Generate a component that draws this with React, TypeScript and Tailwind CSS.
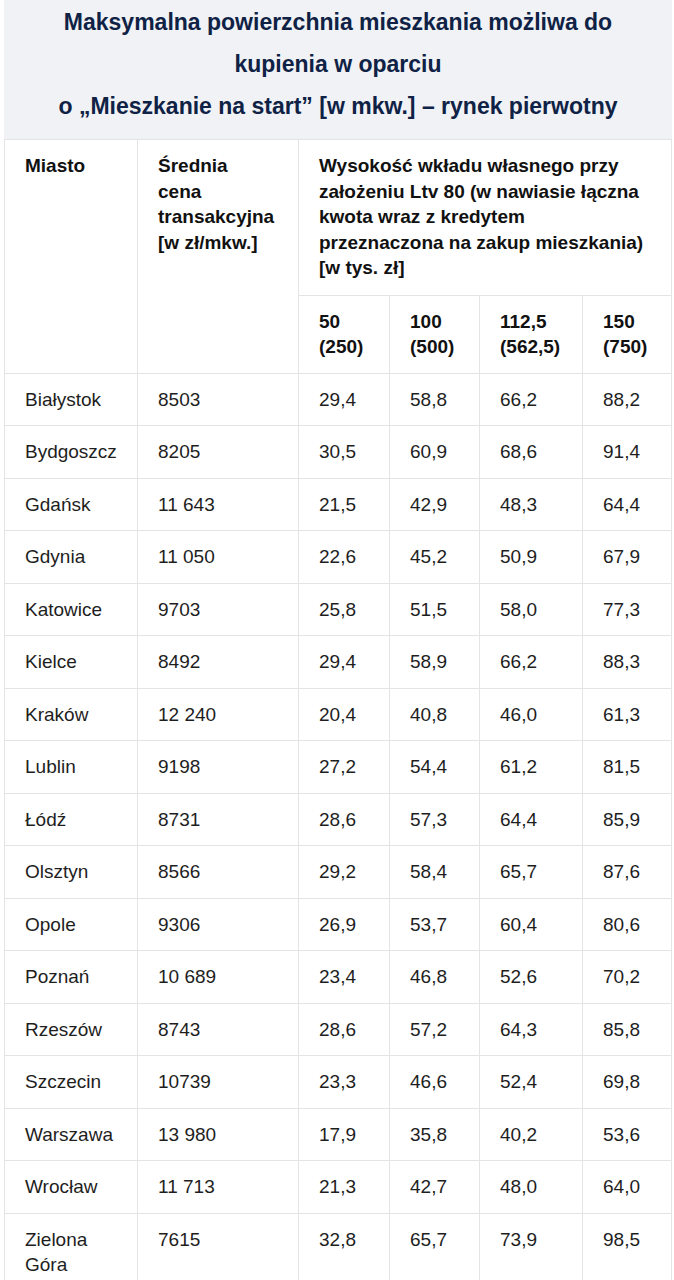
import React from "react";

const rows: [string, string, string, string, string, string][] = [
  ["Białystok", "8503", "29,4", "58,8", "66,2", "88,2"],
  ["Bydgoszcz", "8205", "30,5", "60,9", "68,6", "91,4"],
  ["Gdańsk", "11 643", "21,5", "42,9", "48,3", "64,4"],
  ["Gdynia", "11 050", "22,6", "45,2", "50,9", "67,9"],
  ["Katowice", "9703", "25,8", "51,5", "58,0", "77,3"],
  ["Kielce", "8492", "29,4", "58,9", "66,2", "88,3"],
  ["Kraków", "12 240", "20,4", "40,8", "46,0", "61,3"],
  ["Lublin", "9198", "27,2", "54,4", "61,2", "81,5"],
  ["Łódź", "8731", "28,6", "57,3", "64,4", "85,9"],
  ["Olsztyn", "8566", "29,2", "58,4", "65,7", "87,6"],
  ["Opole", "9306", "26,9", "53,7", "60,4", "80,6"],
  ["Poznań", "10 689", "23,4", "46,8", "52,6", "70,2"],
  ["Rzeszów", "8743", "28,6", "57,2", "64,3", "85,8"],
  ["Szczecin", "10739", "23,3", "46,6", "52,4", "69,8"],
  ["Warszawa", "13 980", "17,9", "35,8", "40,2", "53,6"],
  ["Wrocław", "11 713", "21,3", "42,7", "48,0", "64,0"],
  ["Zielona Góra", "7615", "32,8", "65,7", "73,9", "98,5"],
];

const cell = "border border-[#e4e4e4] pl-[20px] pr-[8px] py-[13px] align-top text-left";

function Lines({ parts }: { parts: string[] }) {
  return (
    <>
      {parts.map((p, i) => (
        <React.Fragment key={i}>
          {i > 0 ? <br /> : null}
          {p}
        </React.Fragment>
      ))}
    </>
  );
}

export default function App() {
  return (
    <div
      className="min-h-screen bg-white pl-[4px] pr-[2px] text-[19px] leading-[25.5px] text-[#1e1e1e]"
      style={{ fontFamily: '"Liberation Sans", Arial, sans-serif' }}
    >
      <div className="bg-[#f0f2f5] pt-[1px] pb-[12px] text-center text-[23px] font-bold leading-[42px] text-[#0f2245]">
        Maksymalna powierzchnia mieszkania możliwa do
        <br />
        kupienia w oparciu
        <br />o „Mieszkanie na start” [w mkw.] – rynek pierwotny
      </div>
      <table className="w-full table-fixed border-collapse">
        <colgroup>
          <col className="w-[133px]" />
          <col className="w-[161px]" />
          <col className="w-[91px]" />
          <col className="w-[90px]" />
          <col className="w-[103px]" />
          <col />
        </colgroup>
        <thead className="font-bold text-[#111]">
          <tr>
            <th rowSpan={2} className={cell}>
              Miasto
            </th>
            <th rowSpan={2} className={cell}>
              <Lines parts={["Średnia", "cena", "transakcyjna", "[w zł/mkw.]"]} />
            </th>
            <th colSpan={4} className={`${cell} pb-[14px]`}>
              <Lines
                parts={[
                  "Wysokość wkładu własnego przy",
                  "założeniu Ltv 80 (w nawiasie łączna",
                  "kwota wraz z kredytem",
                  "przeznaczona na zakup mieszkania)",
                  "[w tys. zł]",
                ]}
              />
            </th>
          </tr>
          <tr>
            {[
              ["50", "(250)"],
              ["100", "(500)"],
              ["112,5", "(562,5)"],
              ["150", "(750)"],
            ].map((h) => (
              <th key={h[0]} className={cell}>
                <Lines parts={h} />
              </th>
            ))}
          </tr>
        </thead>
        <tbody>
          {rows.map((r) => (
            <tr key={r[0]}>
              {r.map((v, i) => (
                <td key={i} className={cell}>
                  {v}
                </td>
              ))}
            </tr>
          ))}
        </tbody>
      </table>
    </div>
  );
}
